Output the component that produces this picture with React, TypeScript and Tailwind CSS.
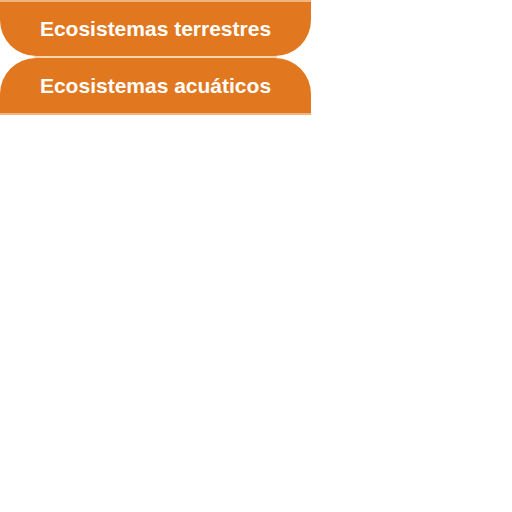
export default function App() {
  return (
    <div className="w-[311px] bg-white" style={{ fontFamily: '"Liberation Sans", Arial, sans-serif' }}>
      <div className="h-[2px] bg-[#f2b47e]" />
      <div className="h-[54px] bg-[#e1771f] rounded-b-[36px] flex items-center justify-center text-white font-bold text-[21px]">
        Ecosistemas terrestres
      </div>
      <div className="h-[2px] px-[34px]">
        <div className="h-full bg-[#f8d4b3]" />
      </div>
      <div className="h-[55px] bg-[#e1771f] rounded-t-[36px] flex items-center justify-center pt-[1px] text-white font-bold text-[21px]">
        Ecosistemas acuáticos
      </div>
      <div className="h-[2px] bg-[#f2b47e]" />
    </div>
  );
}
